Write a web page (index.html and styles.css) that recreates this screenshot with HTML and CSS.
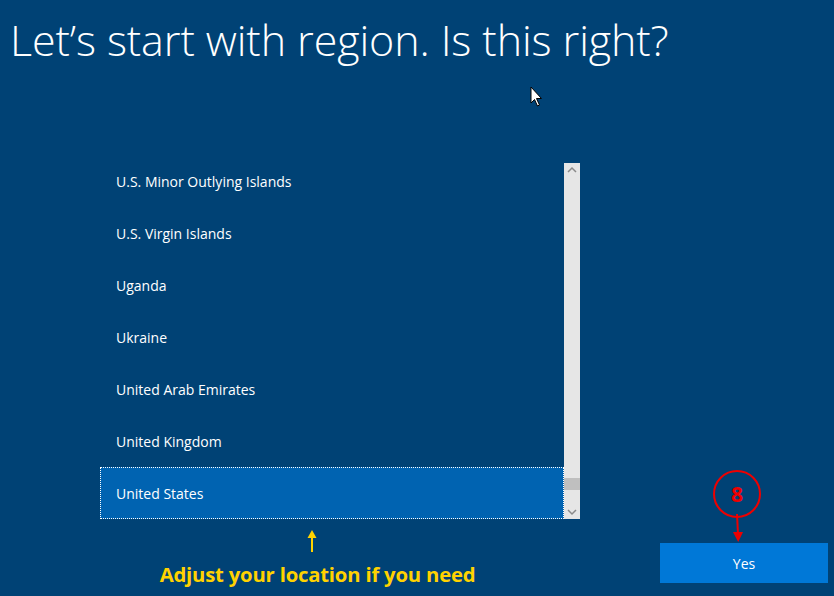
FILE: index.html
```html
<!DOCTYPE html>
<html>
<head>
<meta charset="utf-8">
<link rel="stylesheet" href="styles.css">
</head>
<body>
<div class="page">
  <h1 class="title">Let’s start with region. Is this right?</h1>
  <svg class="cursor" width="14" height="22" viewBox="0 0 14 22"><path d="M1 1 L1 17 L4.5 13.5 L7.5 20 L9.5 19 L6.5 12.5 L11.5 12.5 Z" fill="#fff" stroke="#000" stroke-width="1"/></svg>
  <div class="main">
    <div class="listbox">
      <div class="viewport">
        <ul class="items">
          <li>U.S. Minor Outlying Islands</li>
          <li>U.S. Virgin Islands</li>
          <li>Uganda</li>
          <li>Ukraine</li>
          <li>United Arab Emirates</li>
          <li>United Kingdom</li>
          <li class="selected">United States</li>
        </ul>
      </div>
      <div class="scrollbar">
        <svg class="arrow" width="16" height="14" viewBox="0 0 16 14"><path d="M4 9 L8 5 L12 9" fill="none" stroke="#8a8a8a" stroke-width="1.5"/></svg>
        <div class="track"><div class="thumb"></div></div>
        <svg class="arrow" width="16" height="14" viewBox="0 0 16 14"><path d="M4 5 L8 9 L12 5" fill="none" stroke="#8a8a8a" stroke-width="1.5"/></svg>
      </div>
    </div>
    <div class="hint">
      <svg class="up" width="12" height="24" viewBox="0 0 12 24"><path d="M6 23 L6 6" stroke="#ffd200" stroke-width="2"/><path d="M1.5 9 L6 1 L10.5 9 Z" fill="#ffd200"/></svg>
      <div class="hint-text">Adjust your location if you need</div>
    </div>
  </div>
  <div class="badge">8</div>
  <svg class="badge-arrow" width="14" height="30" viewBox="0 0 14 30"><path d="M6 0 L7 20" stroke="#e00" stroke-width="2"/><path d="M2 18 L12 18 L7.2 28 Z" fill="#e00"/></svg>
  <button class="yes">Yes</button>
</div>
</body>
</html>
```
FILE: styles.css
```css
html, body {
  margin: 0;
  padding: 0;
}
body {
  background: #004275;
  font-family: "Open Sans", "Noto Sans", sans-serif;
  color: #fff;
}
.page {
  position: relative;
  width: 834px;
  height: 596px;
  overflow: hidden;
}
.title {
  margin: 0;
  padding: 12px 0 0 10px;
  font-weight: 300;
  font-size: 43px;
  line-height: 56px;
  letter-spacing: -0.1px;
}
.cursor {
  position: absolute;
  left: 530px;
  top: 86px;
}
.main {
  padding: 95px 0 0 100px;
  width: 480px;
}
.listbox {
  display: flex;
  height: 356px;
}
.viewport {
  width: 464px;
  overflow: hidden;
}
.items {
  list-style: none;
  margin: -8px 0 0 0;
  padding: 0;
}
.items li {
  height: 52px;
  display: flex;
  align-items: center;
  padding-left: 16px;
  font-size: 14px;
  box-sizing: border-box;
}
.items li.selected {
  background: #0063b1;
  outline: 1px dotted #fff;
  outline-offset: -1px;
}
.scrollbar {
  width: 16px;
  background: #e6e6e6;
  display: flex;
  flex-direction: column;
}
.arrow {
  display: block;
  flex: none;
}
.track {
  flex: 1;
  position: relative;
}
.thumb {
  position: absolute;
  left: 0;
  right: 0;
  top: 301px;
  height: 12px;
  background: #bfbfbf;
}
.hint {
  display: flex;
  flex-direction: column;
  align-items: center;
  padding-top: 10px;
}
.up {
  display: block;
  margin-left: -56px;
}
.hint-text {
  margin-top: 7px;
  margin-left: -45px;
  color: #ffd200;
  font-weight: 700;
  font-size: 20.3px;
  letter-spacing: -0.2px;
  white-space: nowrap;
}
.badge {
  position: absolute;
  left: 713px;
  top: 470px;
  width: 44px;
  height: 44px;
  border: 2px solid #e00;
  border-radius: 50%;
  color: #e00;
  font-weight: 700;
  font-size: 21px;
  display: flex;
  align-items: center;
  justify-content: center;
  font-family: "Open Sans", sans-serif;
}
.badge-arrow {
  position: absolute;
  left: 731px;
  top: 514px;
}
.yes {
  position: absolute;
  left: 660px;
  top: 543px;
  width: 168px;
  height: 40px;
  background: #0078d7;
  border: none;
  color: #fff;
  font-family: "Open Sans", sans-serif;
  font-size: 14px;
  padding: 0;
}
```
